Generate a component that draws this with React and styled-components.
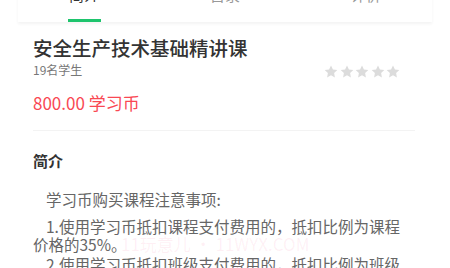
import styled, { createGlobalStyle } from 'styled-components';

const GlobalStyle = createGlobalStyle`
  html, body {
    margin: 0;
    padding: 0;
    background: #fff;
    font-family: "Noto Sans CJK SC", "Noto Sans", sans-serif;
    overflow: hidden;
  }
`;

const TABS = ['简介', '目录', '评价'];

const Page = styled.div`
  position: relative;
  width: 450px;
  height: 268px;
  overflow: hidden;
`;

const TabBar = styled.div`
  margin: -16px 18px 0;
  height: 38px;
  background: #fff;
  box-shadow: 0 2px 3px rgba(0, 0, 0, 0.05);
  display: flex;
  justify-content: center;
`;

const TabRow = styled.div`
  flex: 0 0 423px;
  display: flex;
`;

const Tab = styled.div`
  flex: 1;
  display: flex;
  flex-direction: column;
  align-items: center;
  font-size: 15px;
  line-height: 22px;
  color: ${(p) => (p.$active ? '#333' : '#999')};

  &::after {
    content: '';
    margin-top: 13px;
    width: 33px;
    height: 3px;
    background: ${(p) => (p.$active ? '#1ec46d' : 'transparent')};
  }
`;

const Header = styled.div`
  margin: 0 35px 0 33px;
  padding: 13px 0 15px;
  border-bottom: 1px solid #f3f3f3;
`;

const Title = styled.h1`
  margin: 0;
  font-size: 19.5px;
  line-height: 26px;
  font-weight: 500;
  color: #333;
`;

const MetaRow = styled.div`
  display: flex;
  align-items: center;
  justify-content: space-between;
  height: 18px;
`;

const Students = styled.span`
  font-size: 12px;
  line-height: 18px;
  color: #777;
`;

const Stars = styled.div`
  display: flex;
  gap: 1.5px;
  margin-right: 15px;
  margin-top: 2px;
`;

const Price = styled.div`
  margin-top: 12px;
  font-size: 17px;
  line-height: 24px;
  color: #f94853;
`;

const Intro = styled.div`
  padding: 19px 40px 0 33px;
`;

const SectionTitle = styled.h2`
  margin: 0 0 18px;
  font-size: 15px;
  line-height: 22px;
  font-weight: 700;
  color: #333;
`;

const Para = styled.p`
  margin: 0 0 ${(p) => (p.$gap ? '8px' : '1px')};
  font-size: 15.5px;
  line-height: 18.5px;
  text-indent: 13px;
  color: #666;
`;

const Watermark = styled.div`
  position: absolute;
  left: 121px;
  top: 234px;
  font-size: 17px;
  line-height: 20px;
  color: rgba(250, 90, 140, 0.09);
  white-space: nowrap;
  pointer-events: none;
`;

function Star() {
  return (
    <svg width="14" height="13" viewBox="0 0 24 23">
      <path
        d="M12 0.8l3.4 7.1 7.8 1-5.7 5.4 1.4 7.7L12 18.3l-6.9 3.7 1.4-7.7L0.8 8.9l7.8-1z"
        fill="#dcdcdc"
      />
    </svg>
  );
}

export default function App() {
  return (
    <Page>
      <GlobalStyle />
      <TabBar>
        <TabRow>
          {TABS.map((t, i) => (
            <Tab key={t} $active={i === 0}>{t}</Tab>
          ))}
        </TabRow>
      </TabBar>
      <Header>
        <Title>安全生产技术基础精讲课</Title>
        <MetaRow>
          <Students>19名学生</Students>
          <Stars>
            {[0, 1, 2, 3, 4].map((i) => <Star key={i} />)}
          </Stars>
        </MetaRow>
        <Price>800.00 学习币</Price>
      </Header>
      <Intro>
        <SectionTitle>简介</SectionTitle>
        <Para $gap>学习币购买课程注意事项:</Para>
        <Para>1.使用学习币抵扣课程支付费用的，抵扣比例为课程价格的35%。</Para>
        <Para>2.使用学习币抵扣班级支付费用的，抵扣比例为班级价格的35%。</Para>
      </Intro>
      <Watermark>11玩意儿 • 11WYX.COM</Watermark>
    </Page>
  );
}
